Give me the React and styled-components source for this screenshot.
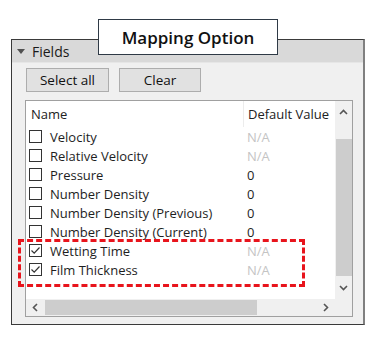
import React from "react";
import styled, { createGlobalStyle } from "styled-components";

const GlobalStyle = createGlobalStyle`
  body {
    margin: 0;
    background: #fff;
    font-family: "Open Sans", "Noto Sans", sans-serif;
  }
`;

const Stage = styled.div`
  position: relative;
  width: 377px;
  height: 340px;
  padding: 39px 0 0 11px;
  box-sizing: border-box;
`;

const TitleTag = styled.div`
  position: absolute;
  left: 98px;
  top: 19px;
  width: 180px;
  height: 36px;
  box-sizing: border-box;
  background: #fff;
  border: 1px solid #2f3a46;
  display: flex;
  align-items: center;
  justify-content: center;
  font-size: 17px;
  font-weight: 600;
  color: #111;
  z-index: 2;
`;

const Panel = styled.div`
  width: 354px;
  height: 286px;
  box-sizing: border-box;
  background: #f0f0f0;
  border: 1px solid #3a3a3a;
  border-right: 2px solid #808080;
  display: flex;
  flex-direction: column;
`;

const SectionBar = styled.div`
  height: 22px;
  background: #d9d9d9;
  border-bottom: 1px solid #e6e6e6;
  display: flex;
  align-items: center;
  padding-left: 5px;
  gap: 7px;
  font-size: 14px;
  color: #1a1a1a;
`;

const Caret = styled.span`
  width: 0;
  height: 0;
  border-left: 4.5px solid transparent;
  border-right: 4.5px solid transparent;
  border-top: 5px solid #505050;
  margin-top: 1px;
`;

const ButtonRow = styled.div`
  display: flex;
  gap: 10px;
  padding: 5px 0 0 14px;
`;

const Button = styled.button`
  width: ${(p) => p.w}px;
  height: 24px;
  box-sizing: border-box;
  background: #e1e1e1;
  border: 1px solid #adadad;
  font-family: inherit;
  font-size: 13.5px;
  color: #111;
  padding: 0;
`;

const ListBox = styled.div`
  margin: 8px 0 0 13px;
  width: 328px;
  height: 217px;
  box-sizing: border-box;
  border: 1px solid #a0a0a0;
  background: #fff;
  display: grid;
  grid-template-columns: 1fr 17px;
  grid-template-rows: 1fr 17px;
`;

const Table = styled.div`
  overflow: hidden;
  font-size: 13px;
`;

const HeadRow = styled.div`
  display: flex;
  height: 26px;
  align-items: center;
  color: #222;
  white-space: nowrap;
`;

const HeadCell = styled.div`
  width: ${(p) => p.w}px;
  flex: none;
  padding-left: ${(p) => p.pad}px;
  box-sizing: border-box;
  border-left: ${(p) => (p.divider ? "1px solid #ececec" : "none")};
  height: 100%;
  display: flex;
  align-items: center;
`;

const Row = styled.div`
  display: flex;
  height: 19px;
  align-items: center;
  white-space: nowrap;
  color: #1e1e1e;
`;

const NameCell = styled.div`
  width: 217px;
  flex: none;
  display: flex;
  align-items: center;
  gap: 8px;
  padding-left: 3px;
  box-sizing: border-box;
`;

const ValueCell = styled.div`
  padding-left: 4px;
  color: ${(p) => (p.muted ? "#c4c4c4" : "#1e1e1e")};
`;

const VScroll = styled.div`
  background: #f0f0f0;
  display: flex;
  flex-direction: column;
  align-items: center;
`;

const ArrowBox = styled.div`
  height: ${(p) => p.h}px;
  width: ${(p) => (p.w ? `${p.w}px` : "100%")};
  display: flex;
  align-items: center;
  justify-content: center;
  flex: none;
`;

const VThumb = styled.div`
  width: 16px;
  height: 137px;
  background: #cdcdcd;
  margin-left: 1px;
`;

const HScroll = styled.div`
  background: #f0f0f0;
  display: flex;
  align-items: center;
`;

const HThumb = styled.div`
  width: 212px;
  height: 15px;
  background: #cdcdcd;
`;

const Spacer = styled.div`
  flex: 1;
`;

const Corner = styled.div`
  background: #f0f0f0;
`;

const Annotation = styled.div`
  position: absolute;
  left: 18px;
  top: 239px;
  width: 287px;
  height: 48px;
  box-sizing: border-box;
  border: 3px dashed #e8141c;
  pointer-events: none;
`;

const Check = ({ on }) => (
  <svg width="13" height="13" viewBox="0 0 13 13">
    <rect x="0.5" y="0.5" width="12" height="12" fill="#fff" stroke="#333" />
    {on && (
      <path d="M2.5 6.5 L5.2 9.2 L10.5 3.5" fill="none" stroke="#333" strokeWidth="1.2" />
    )}
  </svg>
);

const Chevron = ({ dir }) => {
  const paths = {
    up: "M1 6 L4.5 2.5 L8 6",
    down: "M1 3 L4.5 6.5 L8 3",
    left: "M6 1 L2.5 4.5 L6 8",
    right: "M3 1 L6.5 4.5 L3 8",
  };
  return (
    <svg width="9" height="9" viewBox="0 0 9 9">
      <path d={paths[dir]} fill="none" stroke="#555" strokeWidth="1.6" />
    </svg>
  );
};

const fields = [
  { name: "Velocity", value: "N/A", muted: true },
  { name: "Relative Velocity", value: "N/A", muted: true },
  { name: "Pressure", value: "0" },
  { name: "Number Density", value: "0" },
  { name: "Number Density (Previous)", value: "0" },
  { name: "Number Density (Current)", value: "0" },
  { name: "Wetting Time", value: "N/A", muted: true, checked: true },
  { name: "Film Thickness", value: "N/A", muted: true, checked: true },
];

const App = () => {
  return (
    <Stage>
      <GlobalStyle />
      <TitleTag>Mapping Option</TitleTag>
      <Panel>
        <SectionBar>
          <Caret />
          Fields
        </SectionBar>
        <ButtonRow>
          <Button w={83}>Select all</Button>
          <Button w={82}>Clear</Button>
        </ButtonRow>
        <ListBox>
          <Table>
            <HeadRow>
              <HeadCell w={217} pad={5}>Name</HeadCell>
              <HeadCell w={100} pad={4} divider>Default Value</HeadCell>
            </HeadRow>
            {fields.map((f) => (
              <Row key={f.name}>
                <NameCell>
                  <Check on={f.checked} />
                  {f.name}
                </NameCell>
                <ValueCell muted={f.muted}>{f.value}</ValueCell>
              </Row>
            ))}
          </Table>
          <VScroll>
            <ArrowBox h={22}>
              <Chevron dir="up" />
            </ArrowBox>
            <ArrowBox h={16} />
            <VThumb />
            <ArrowBox h={22}>
              <Chevron dir="down" />
            </ArrowBox>
          </VScroll>
          <HScroll>
            <ArrowBox h={17} w={19}>
              <Chevron dir="left" />
            </ArrowBox>
            <HThumb />
            <Spacer />
            <ArrowBox h={17} w={19}>
              <Chevron dir="right" />
            </ArrowBox>
          </HScroll>
          <Corner />
        </ListBox>
      </Panel>
      <Annotation />
    </Stage>
  );
};

export default App;
